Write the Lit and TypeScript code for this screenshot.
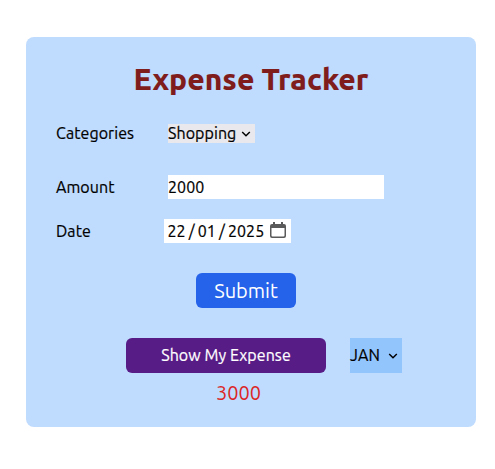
import { LitElement, html, css, svg } from "lit";
import { customElement, state } from "lit/decorators.js";

const chevron = html`<svg class="chevron" viewBox="0 0 10 6" aria-hidden="true">
  ${svg`<path d="M1.2 1 L5 4.7 L8.8 1" fill="none" stroke="#000" stroke-width="1.5" />`}
</svg>`;

const calendar = html`<svg class="calendar" viewBox="0 0 16 16" aria-hidden="true">
  ${svg`<path fill="#5a5a5a" fill-rule="evenodd" d="M3 0h2v2h6V0h2v2h1a2 2 0 0 1 2 2v10a2 2 0 0 1-2 2H2a2 2 0 0 1-2-2V4a2 2 0 0 1 2-2h1zM1.5 6v7.5a1 1 0 0 0 1 1h11a1 1 0 0 0 1-1V6z" />`}
</svg>`;

@customElement("app-root")
export class AppRoot extends LitElement {
  @state() private category = "Shopping";
  @state() private amount = "2000";
  @state() private date = ["22", "01", "2025"];
  @state() private month = "JAN";
  @state() private total = 3000;

  static styles = css`
    :host {
      display: block;
      height: 469px;
      box-sizing: border-box;
      padding: 37px 19px 42px 26px;
      background: #fff;
      color: #000;
      font: 400 16px/24px Ubuntu, "Noto Sans", sans-serif;
    }
    * { box-sizing: border-box; }
    .card {
      width: 450px;
      height: 390px;
      padding: 24px 30px 0;
      border-radius: 8px;
      background: #bfdbfe;
    }
    h1 {
      margin: 0;
      text-align: center;
      font-size: 30px;
      line-height: 36px;
      font-weight: 800;
      color: #7f1d1d;
    }
    .row { display: flex; align-items: center; height: 24px; white-space: nowrap; }
    .row, .actions { letter-spacing: 0.07px; -webkit-text-stroke: 0.2px currentColor; }
    .row.category { margin-top: 24px; }
    .row.amount { margin-top: 30px; }
    .row.date { margin-top: 20px; }
    .label { width: 112px; }
    .date .label { width: 108px; }
    .select { display: flex; align-items: center; justify-content: space-between; }
    .select.kind { width: 87px; height: 19px; padding-right: 4px; background: #e9e9ed; }
    .select.month { width: 52px; height: 35px; padding: 0 4px 1px 0; margin-left: 24px; background: #93c5fd; }
    .chevron { width: 10px; height: 6px; flex: none; margin-top: 1px; }
    .month .chevron { margin-top: 2px; }
    .field { width: 216px; height: 24px; background: #fff; }
    .picker { display: flex; align-items: center; width: 127px; height: 24px; padding: 0 5px 0 3.5px; background: #fff; }
    .slash { width: 12px; text-align: center; }
    .calendar { width: 16px; height: 16px; margin: -2px 0 0 auto; }
    button { display: block; border: 0; padding: 0; height: 35px; border-radius: 6px; color: #fff; font: inherit; letter-spacing: inherit; white-space: nowrap; }
    .submit { width: 100px; margin: 30px 0 0 140px; background: #2563eb; font-size: 20px; }
    .actions { display: flex; margin: 30px 0 0 70px; }
    .show { width: 200px; padding-bottom: 1px; background: #581c87; }
    .total { margin: 6px 25px 0 0; text-align: center; font-size: 20px; line-height: 28px; color: #dc2626; }
  `;

  render() {
    const [day, mon, year] = this.date;
    return html`
      <main class="card">
        <h1>Expense Tracker</h1>
        <div class="row category">
          <span class="label">Categories</span>
          <div class="select kind"><span>${this.category}</span>${chevron}</div>
        </div>
        <div class="row amount">
          <span class="label">Amount</span>
          <div class="field">${this.amount}</div>
        </div>
        <div class="row date">
          <span class="label">Date</span>
          <div class="picker">
            <span>${day}</span><span class="slash">/</span><span>${mon}</span><span class="slash">/</span><span>${year}</span>
            ${calendar}
          </div>
        </div>
        <button class="submit">Submit</button>
        <div class="actions">
          <button class="show">Show My Expense</button>
          <div class="select month"><span>${this.month}</span>${chevron}</div>
        </div>
        <div class="total">${this.total}</div>
      </main>
    `;
  }
}
